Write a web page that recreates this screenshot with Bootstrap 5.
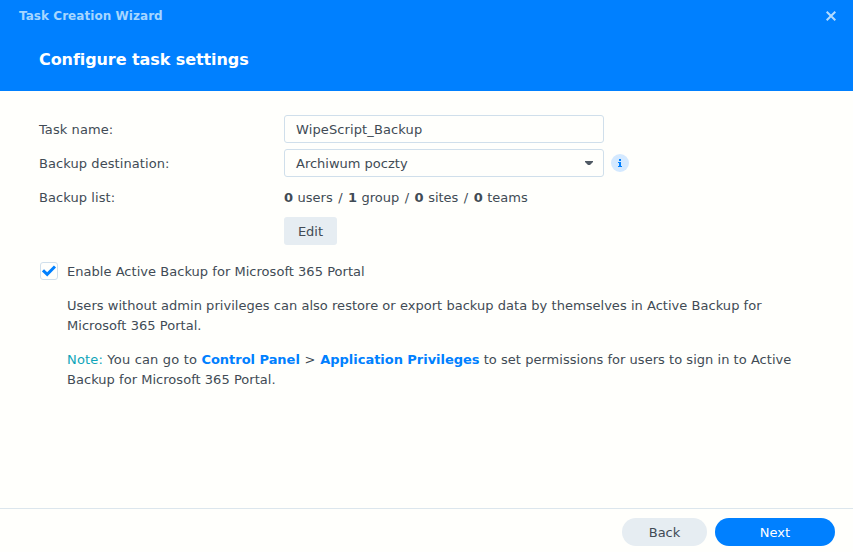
<!DOCTYPE html>
<html lang="en">
<head>
<meta charset="utf-8">
<meta name="viewport" content="width=device-width, initial-scale=1">
<title>Task Creation Wizard</title>
<link href="https://cdn.jsdelivr.net/npm/bootstrap@5.3.0/dist/css/bootstrap.min.css" rel="stylesheet">
<style>
body{font-family:Verdana,"DejaVu Sans",sans-serif;font-size:13px;line-height:20px;color:#414b55;background:#fffffc;overflow:hidden}
.wizard-head{background:#0080ff;height:91px}
.wizard-title{font-size:12px;line-height:20px;color:#a6d6ff;padding:6px 17px 0 19px;letter-spacing:.05px}
.close-btn{line-height:0;padding:0 0 1px;color:#b3dbff}
.step-title{font-size:16px;line-height:24px;padding:22px 39px 0;letter-spacing:-.08px}
.wizard-body{padding:24px 39px 0}
.form-line{height:28px;margin-bottom:6px}
.form-line span:not(.check-box),.form-line label{padding-top:2px}
.line-label{width:245px;letter-spacing:.08px}
.field{width:320px;height:28px;border:1px solid #d0dfeb;border-radius:3px;padding:0 11px;font-size:13px;line-height:20px;color:#414b55;background:#fffffc}
input.field{letter-spacing:.12px}
.select-field{padding-right:9px}
.info-dot{margin-left:7px}
.counts{word-spacing:.4px}
.slash{margin:0 .9px}
.btn-edit{--bs-btn-bg:#e6edf2;--bs-btn-color:#414b55;width:53px;height:28px;border-radius:3px;font-size:13px;line-height:20px;padding:2px 0 0;border:0}
.check-box{width:18px;height:18px;border:1px solid #d0dfeb;border-radius:3px;margin:0 9px 0 1px}
.check-line{margin-top:12px;margin-bottom:11px}
.check-line,.detail{letter-spacing:.035px}
.detail{padding-left:28px}
.detail p{margin-bottom:14px}
.note-lead{letter-spacing:.18px}
.gt{margin:0 .6px}
.note{color:#0fa5b9}
.detail a{color:#0080ff;letter-spacing:-.03px}
.wizard-foot{height:44px;border-top:1px solid #dce6ed;padding:9px 18px 0}
.btn-pill{height:28px;border:0;padding:2px 0 0;font-size:13px;line-height:20px}
.btn-back{width:85px;background:#e6edf2;color:#414b55}
.btn-next{width:120px;background:#0080ff;color:#fff}
</style>
<script src="https://cdn.jsdelivr.net/npm/bootstrap@5.3.0/dist/js/bootstrap.bundle.min.js"></script>
</head>
<body class="vh-100 d-flex flex-column">
<header class="wizard-head flex-shrink-0">
  <div class="wizard-title d-flex justify-content-between fw-bold">
    <span>Task Creation Wizard</span>
    <button type="button" class="close-btn btn border-0" aria-label="Close"><svg width="10" height="10" viewBox="0 0 10 10" fill="none" stroke="currentColor" stroke-width="2"><path d="M.7.7l8.6 8.6M9.3.7L.7 9.3"/></svg></button>
  </div>
  <h1 class="step-title text-white fw-bold mb-0">Configure task settings</h1>
</header>
<main class="wizard-body flex-grow-1">
  <div class="form-line d-flex align-items-center">
    <label class="line-label" for="taskName">Task name:</label>
    <input id="taskName" class="field" type="text" value="WipeScript_Backup">
  </div>
  <div class="form-line d-flex align-items-center">
    <span class="line-label">Backup destination:</span>
    <div class="field select-field d-flex align-items-center justify-content-between" role="combobox" aria-expanded="false"><span>Archiwum poczty</span><svg width="10" height="4" viewBox="0 0 10 4" fill="#505a64"><path d="M1 0h8v1L6 4H4L1 1z"/></svg></div>
    <svg class="info-dot" width="18" height="18" viewBox="0 0 18 18"><circle cx="9" cy="9" r="9" fill="#d4e9ff"/><path d="M8 5h2v2H8zM7 8h3v4h1v1H7v-1h1V9H7z" fill="#0080ff"/></svg>
  </div>
  <div class="form-line d-flex align-items-center">
    <span class="line-label">Backup list:</span>
    <span class="counts"><b>0</b> users <span class="slash">/</span> <b>1</b> group <span class="slash">/</span> <b>0</b> sites <span class="slash">/</span> <b>0</b> teams</span>
  </div>
  <div class="form-line d-flex"><span class="line-label"></span><button type="button" class="btn btn-edit">Edit</button></div>
  <div class="form-line check-line d-flex align-items-center">
    <span class="check-box d-flex align-items-center justify-content-center" role="checkbox" aria-checked="true"><svg width="14" height="12" viewBox="0 0 14 12" fill="none" stroke="#0080ff" stroke-width="3"><path d="M1 5.3l4.2 4L13 1.5"/></svg></span>
    <span>Enable Active Backup for Microsoft 365 Portal</span>
  </div>
  <div class="detail">
    <p>Users without admin privileges can also restore or export backup data by themselves in Active Backup for<br>Microsoft 365 Portal.</p>
    <p><span class="note-lead"><span class="note">Note:</span> You can go to </span><a href="#" class="fw-bold text-decoration-none">Control Panel</a> <span class="gt">&gt;</span> <a href="#" class="fw-bold text-decoration-none">Application Privileges</a> to set permissions for users to sign in to Active<br>Backup for Microsoft 365 Portal.</p>
  </div>
</main>
<footer class="wizard-foot d-flex justify-content-end gap-2 flex-shrink-0">
  <button type="button" class="btn btn-pill btn-back rounded-pill">Back</button>
  <button type="button" class="btn btn-pill btn-next rounded-pill">Next</button>
</footer>
</body>
</html>
